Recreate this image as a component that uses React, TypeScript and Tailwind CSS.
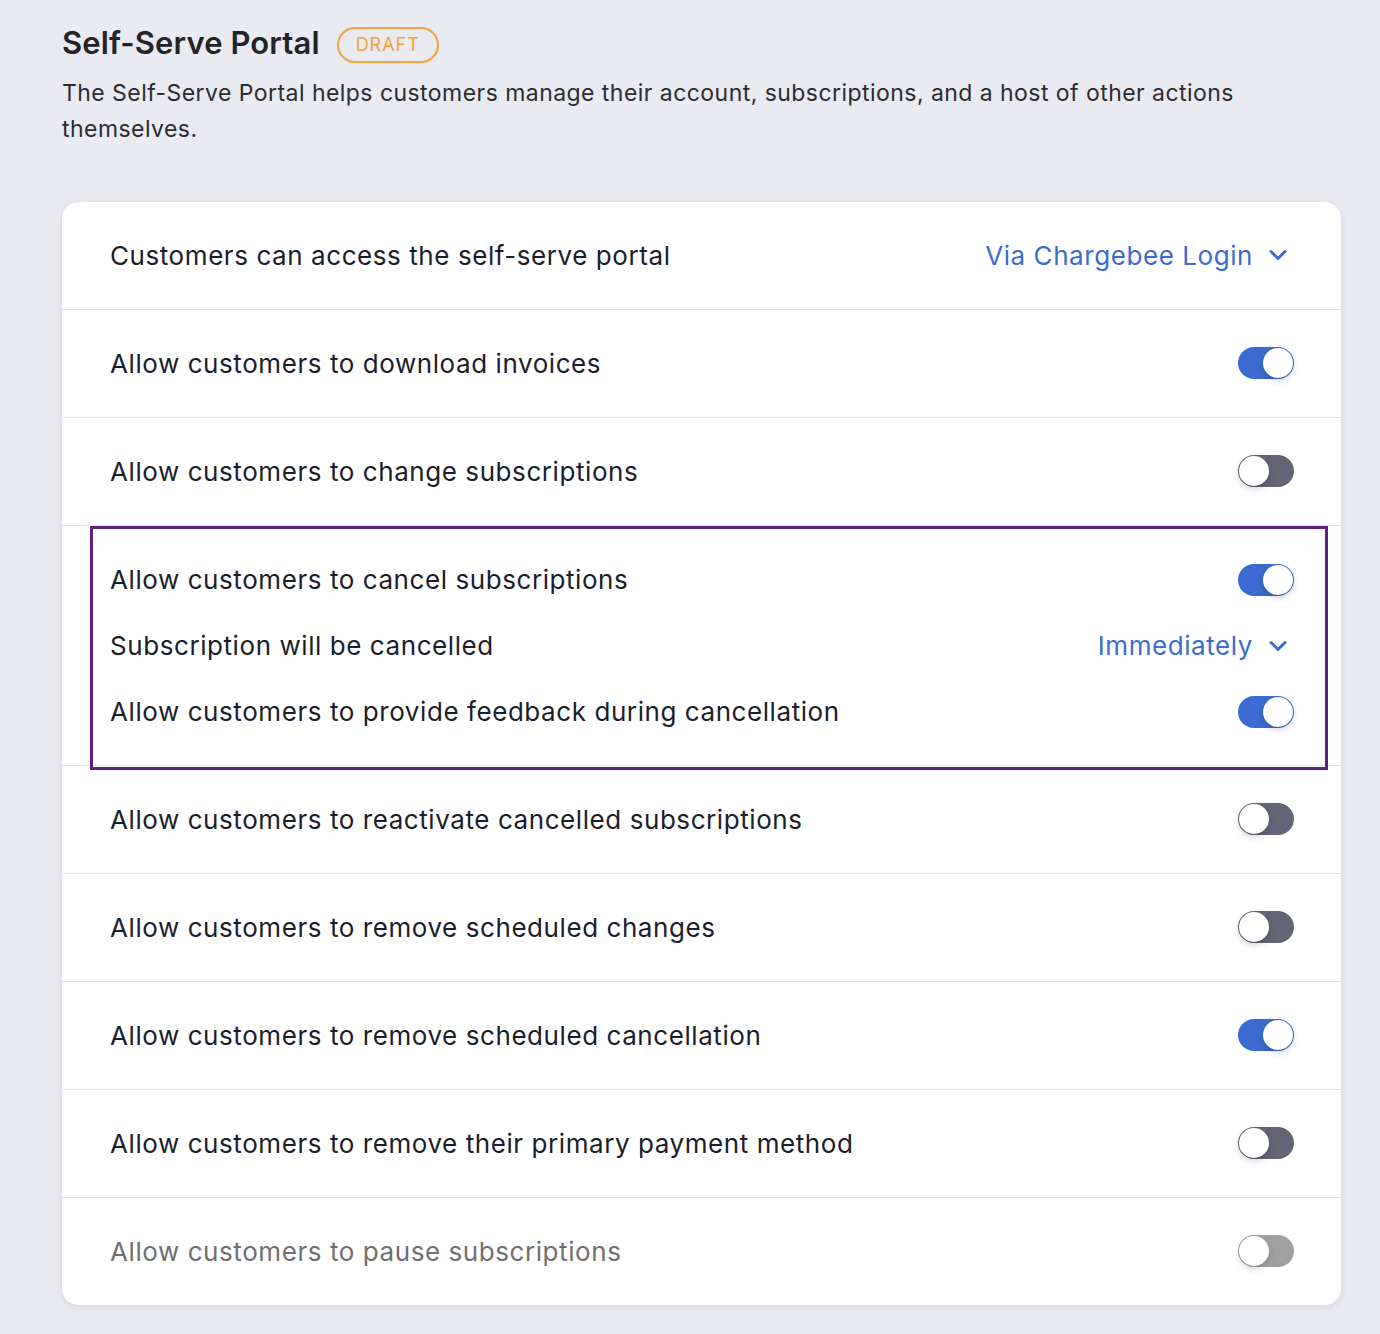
import React from "react";

type Row = { label: string; on?: boolean; disabled?: boolean };

const rowsTop: Row[] = [
  { label: "Allow customers to download invoices", on: true },
  { label: "Allow customers to change subscriptions", on: false },
];

const rowsBottom: Row[] = [
  { label: "Allow customers to reactivate cancelled subscriptions", on: false },
  { label: "Allow customers to remove scheduled changes", on: false },
  { label: "Allow customers to remove scheduled cancellation", on: true },
  { label: "Allow customers to remove their primary payment method", on: false },
  { label: "Allow customers to pause subscriptions", on: false, disabled: true },
];

const Toggle = ({ on, disabled }: { on?: boolean; disabled?: boolean }) => {
  const track = disabled ? "bg-[#a0a0a0]" : on ? "bg-[#3b6bd0]" : "bg-[#646477]";
  return (
    <div className={`relative w-[56px] h-[32px] rounded-full ${track}`}>
      <div
        className={`absolute top-[1px] w-[30px] h-[30px] rounded-full bg-white shadow-[0_3px_6px_rgba(0,0,0,0.18)] ${
          on ? "right-[1px]" : "left-[1px]"
        }`}
      ></div>
    </div>
  );
};

const Chevron = () => (
  <svg width="20" height="12" viewBox="0 0 20 12" fill="none" stroke="#3b6bd0" strokeWidth="3" strokeLinecap="round" strokeLinejoin="round">
    <path d="M3 2.5l7 7 7-7" />
  </svg>
);

const SettingRow = ({ row }: { row: Row }) => (
  <div className="h-[108px] flex items-center justify-between pl-[48px] pr-[47px] border-t border-[#e2e2e6]">
    <span className={row.disabled ? "text-[#6f6f73]" : "text-[#1b1d2c]"}>{row.label}</span>
    <Toggle on={row.on} disabled={row.disabled} />
  </div>
);

export default function App() {
  return (
    <div
      className="min-h-[1334px] bg-[#eaeaf2] pl-[62px] pr-[39px] pt-[20px] pb-[30px]"
      style={{ fontFamily: "Inter, 'Noto Sans', sans-serif" }}
    >
      <div className="flex items-center gap-[17px]">
        <h1 className="text-[31px] font-semibold text-[#232429] tracking-[0.1px]">Self-Serve Portal</h1>
        <span className="mt-[3px] h-[36px] px-[17px] rounded-full border-2 border-[#f2a33a] text-[#f2a33a] text-[18px] tracking-[1px] flex items-center">
          DRAFT
        </span>
      </div>
      <p className="mt-[8px] text-[23px] leading-[36px] text-[#2b2c31] tracking-[0.45px] max-w-[1240px]">
        The Self-Serve Portal helps customers manage their account, subscriptions, and a host of other actions themselves.
      </p>

      <div className="mt-[55px] bg-white rounded-[16px] shadow-[0_2px_6px_rgba(60,60,90,0.12)] text-[26px] tracking-[0.57px] overflow-hidden">
        <div className="h-[107px] flex items-center justify-between pl-[48px] pr-[53px]">
          <span className="text-[#1b1d2c]">Customers can access the self-serve portal</span>
          <div className="flex items-center gap-[15px] text-[#3b6bd0]">
            <span>Via Chargebee Login</span>
            <Chevron />
          </div>
        </div>
        {rowsTop.map((r) => (
          <SettingRow key={r.label} row={r} />
        ))}
        <div className="border-t border-[#e2e2e6] pl-[28px] pr-[13px]">
          <div className="border-[3px] border-[#5a2381] pl-[17px] pr-[31px] pt-[18px] pb-[22px] mb-[-5px] relative">
            <div className="h-[66px] flex items-center justify-between">
              <span className="text-[#1b1d2c]">Allow customers to cancel subscriptions</span>
              <Toggle on />
            </div>
            <div className="h-[66px] flex items-center justify-between">
              <span className="text-[#1b1d2c]">Subscription will be cancelled</span>
              <div className="flex items-center gap-[15px] text-[#3b6bd0] pr-[6px]">
                <span>Immediately</span>
                <Chevron />
              </div>
            </div>
            <div className="h-[66px] flex items-center justify-between">
              <span className="text-[#1b1d2c]">Allow customers to provide feedback during cancellation</span>
              <Toggle on />
            </div>
          </div>
        </div>
        {rowsBottom.map((r) => (
          <SettingRow key={r.label} row={r} />
        ))}
      </div>
    </div>
  );
}
